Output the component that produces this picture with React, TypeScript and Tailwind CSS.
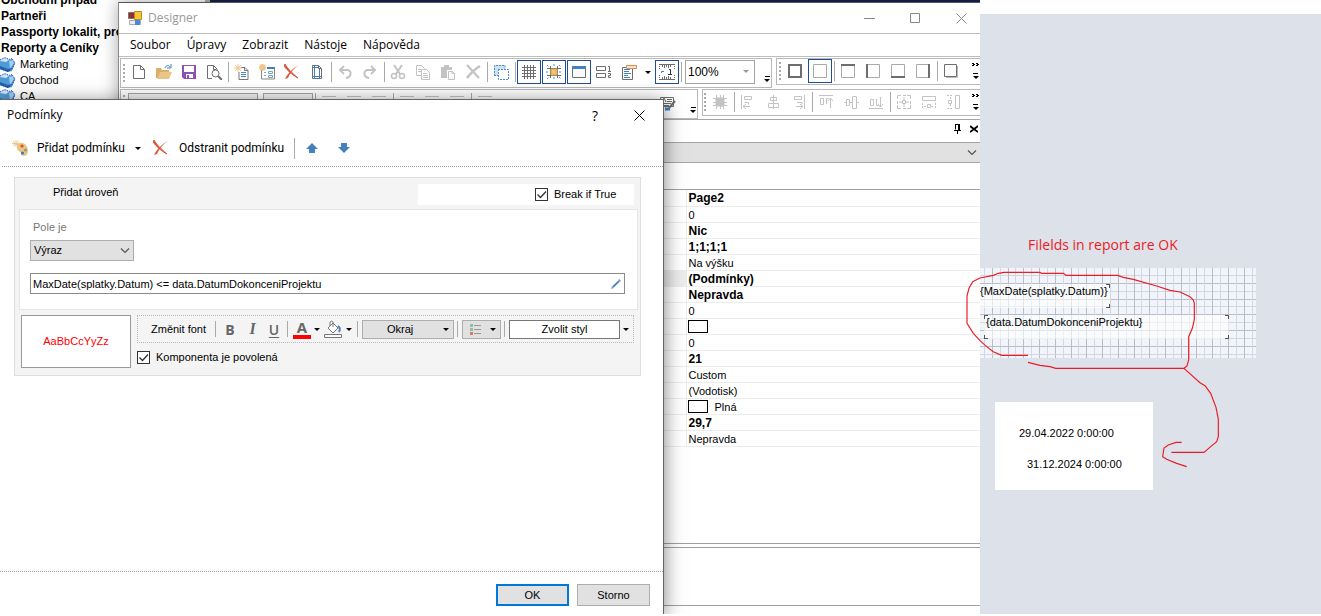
import React from 'react';
import clsx from 'clsx';

const Icon = ({ children, className }: { children: React.ReactNode; className?: string }) => (
  <svg
    viewBox="0 0 16 16"
    className={clsx('w-4 h-4 shrink-0', className)}
    fill="none"
    stroke="currentColor"
    aria-hidden="true"
  >
    {children}
  </svg>
);

const icons = {
  page: <path d="M2.500 1.500h7l4 4v9h-11zM9.500 1.500v4h4" />,
  open: (
    <>
      <path d="M0 4h5l1 2h7v2H5l-3 6H0z" fill="#dcae68" stroke="none" />
      <path d="M4 8h12l-3 7H1z" fill="#ebc487" stroke="none" />
      <path d="M9 4c1-3 4-3 5-1M15 0v4h-4" stroke="#3f7fbd" />
    </>
  ),
  save: (
    <>
      <path d="M1 1h14v14H3l-2-2z" fill="#8d51b2" stroke="none" />
      <path d="M3 2h10v6H3zM5 10h7v4H5z" fill="#fff" stroke="none" />
      <path d="M6 11h2v3H6z" fill="#8d51b2" stroke="none" />
    </>
  ),
  preview: (
    <>
      <path d="M6 14.500H1.500v-13h6l4 4M7.500 1.500v4h3" />
      <circle cx="9.500" cy="9.500" r="3.500" />
      <path d="M12 12l4 4" strokeWidth="2" />
    </>
  ),
  newPage: (
    <>
      <path d="M7 3.500h4l3 3v9h-9V8M10.500 3.500v3H14" stroke="#777" />
      <path d="M7 8.500h5M7 10.500h5M7 12.500h5" stroke="#4b86bd" />
      <path d="M4 0v8M0 4h8M1 1l6 6M7 1L1 7" stroke="#ecc68a" />
    </>
  ),
  newForm: (
    <>
      <path d="M2.500 6v9h13V3.500H8" stroke="#888" />
      <path d="M8 4h8" stroke="#3f7fbd" strokeWidth="2" />
      <path d="M5 8.500h2M5 11.500h2M9.500 7.500h4v2h-4zM9.500 11.500h4v2h-4z" stroke="#7fa3c7" />
      <path d="M3.500 0v7M0 3.500h7M1 1l5 5M6 1L1 6" stroke="#ecc68a" strokeWidth="2" />
    </>
  ),
  remove: (
    <>
      <path d="M1 0c2 4 7 9 13 14C8 11 3 6 0 2z" fill="#d9573f" stroke="#d9573f" />
      <path d="M15 1C10 4 6 9 4 14l-3 1C4 9 9 4 15 1z" fill="#d9573f" stroke="none" />
    </>
  ),
  pageSetup: (
    <>
      <path d="M3.500 1.500h6l3 3v10h-9zM9.500 1.500v3h3" />
      <path d="M5.500 1v14M10.500 5v10M3 12.500h10M3 3.500h7" stroke="#3f7fbd" />
    </>
  ),
  undo: <path d="M3 6h7c5 0 5 7-1 8M7 2L3 6l4 4" strokeWidth="2" />,
  redo: <path d="M13 6H6c-5 0-5 7 1 8M9 2l4 4-4 4" strokeWidth="2" />,
  cut: (
    <>
      <path d="M4 1l6 9M12 1L6 10" strokeWidth="2" />
      <circle cx="4" cy="12" r="2.500" strokeWidth="1.500" />
      <circle cx="12" cy="12" r="2.500" strokeWidth="1.500" />
    </>
  ),
  copy: <path d="M6 11.500H1.500v-10h5l3 3M3 5.500h3M3 7.500h3M6.500 5.500h5l3 3v7h-8zM8 9.500h4M8 11.500h5M8 13.500h5" />,
  paste: (
    <>
      <path d="M1 3h3V1h5v2h3v3H7v8H1z" fill="currentColor" stroke="none" />
      <path d="M8.500 7.500h4l2 2v6h-6zM12 7.500v2h2" />
    </>
  ),
  removeOff: (
    <>
      <path d="M2 1l12 13" strokeWidth="2" />
      <path d="M15 2C10 5 5 10 2 14" strokeWidth="2.500" />
    </>
  ),
  selectAll: (
    <>
      <path d="M1 1h11v4H5v7H1z" fill="#cfe0f1" stroke="none" />
      <path d="M1.500 12V1.500H12V5M1 11.500h4M5 5.500h10.500v10h-10V5" stroke="#4b8fd0" strokeDasharray="2 1" />
    </>
  ),
  grid: <path d="M3.500 1v14M6.500 1v14M9.500 1v14M12.500 1v14M1 3.500h14M1 6.500h14M1 9.500h14M1 12.500h14" />,
  snap: (
    <>
      <path d="M4.500 2v12M11.500 2v12M1 4.500h14M1 11.500h14" />
      <path d="M5 5h6v6H5z" fill="#f0c271" stroke="#d9a64f" />
      <path d="M8 0v3M8 13v3M0 8h3M13 8h3M1 1l2 2M13 1l2 2M1 15l2-2M13 13l2 2" stroke="#4b8fd0" strokeDasharray="2 1" />
    </>
  ),
  header: (
    <>
      <path d="M1.500 2.500h13v11h-13z" fill="#fafafa" />
      <path d="M1 2h14v3H1z" fill="#4480bb" stroke="none" />
    </>
  ),
  order: (
    <>
      <path d="M.5 2.500h9v4h-9zM.5 9.500h9v4h-9z" />
      <path d="M12 2.500h1.500V7M12 7.500h3M12 9.500h2.500v2h-2v2H15" />
    </>
  ),
  report: (
    <>
      <path d="M1.500 3.500h10v12h-10z" />
      <path d="M3 5.500h6M3 7.500h5M3 9.500h7M3 11.500h4M3 13.500h6" stroke="#3f7fbd" />
      <path d="M5.500 1.500h10v3h-10z" fill="#fbe3d2" stroke="#e08c4e" />
    </>
  ),
  ruler: (
    <>
      <path d="M.5 .5h15M.5 15.500h15" />
      <path d="M.5 0v5M15.500 0v5M.5 11v5M15.500 11v5" strokeDasharray="1 1" />
      <path d="M3.500 1v2M5.500 1v3M7.500 1v2M9.500 1v3M11.500 1v2M3.500 13v2M5.500 12v3M7.500 13v2M9.500 12v3M11.500 13v2" />
      <path d="M10 5.500h1.500V10M9 10.500h4" stroke="#333" />
      <path d="M2.500 9V7.500H5" stroke="#3f7fbd" />
    </>
  ),
  borderAll: <path d="M2 2h12v12H2z" strokeWidth="2" />,
  borderNone: <path d="M1.500 1.500h13v13h-13z" stroke="#aaa" />,
  borderTop: (
    <>
      <path d="M1.500 1.500h13v13h-13z" stroke="#aaa" />
      <path d="M1 2h14" strokeWidth="2" />
    </>
  ),
  borderLeft: (
    <>
      <path d="M1.500 1.500h13v13h-13z" stroke="#aaa" />
      <path d="M2 1v14" strokeWidth="2" />
    </>
  ),
  borderBottom: (
    <>
      <path d="M1.500 1.500h13v13h-13z" stroke="#aaa" />
      <path d="M1 14h14" strokeWidth="2" />
    </>
  ),
  borderRight: (
    <>
      <path d="M1.500 1.500h13v13h-13z" stroke="#aaa" />
      <path d="M14 1v14" strokeWidth="2" />
    </>
  ),
  borderShadow: (
    <>
      <path d="M3 14.500h11.500V3" stroke="#bbb" strokeWidth="1" />
      <path d="M1.500 1.500h12v12h-12z" />
    </>
  ),
  alignGrid: (
    <>
      <path d="M4 4h8v8H4z" fill="currentColor" />
      <path d="M4.500 1v14M8.500 1v14M11.500 1v14M1 4.500h14M1 8.500h14M1 11.500h14" />
    </>
  ),
  alignLeft: <path d="M1.500 1v14M4.500 2.500h7v3h-7zM4.500 8.500h4v2M3 12.500h7M6 10l-3 2.500L6 15" />,
  alignCenter: <path d="M8.500 1v14M5.500 3.500h6v3h-6zM3.500 9.500h10v4h-10z" />,
  alignRight: <path d="M14.500 1v14M4.500 2.500h7v3h-7zM7 8.500h5v2M6 12.500h7M10 10l3 2.500-3 2.500" />,
  alignTop: <path d="M1 1.500h14M2.500 4.500h3v6h-3zM8.500 10V4.500h2M12.500 4v10M10 7l2.500-3L15 7" />,
  alignMiddle: <path d="M1 8.500h2M7 8.500h2M14 8.500h2M3.500 5.500h3v6h-3zM9.500 2.500h4v12h-4z" />,
  alignBottom: <path d="M1 14.500h14M2.500 5.500h3v6h-3zM8.500 5v6.500h2M12.500 3v10M10 10l2.500 3L15 10" />,
  center: (
    <>
      <path d="M1.500 5V1.500H5M7 1.500h3M11 1.500h3.500V5M14.500 7v3M14.500 11v3.500H11M10 14.500H7M5 14.500H1.500V11M1.500 10V7" />
      <path d="M6.500 6.500h3v3h-3zM8 3v3M8 10v3M3 8h3M10 8h3" />
    </>
  ),
  sameWidth: (
    <>
      <path d="M1.500 2.500h13v4h-13zM6.500 10.500h3v3h-3z" />
      <path d="M1.500 9v6M14.500 9v6M3 12.500h3M10 12.500h3" strokeDasharray="2 1" />
    </>
  ),
  sameHeight: (
    <>
      <path d="M9.500 1.500h4v13h-4zM2.500 6.500h3v3h-3z" />
      <path d="M1 1.500h6M1 14.500h6M4.500 3v3M4.500 10v3" strokeDasharray="2 1" />
    </>
  ),
  style: (
    <>
      <path d="M.5 2.500h13v9H.5zM7 4.500h5M7 6.500h5M2 8.500h9M2 10.500h7" />
      <path d="M2 7l2-4 2 4" />
      <path d="M15 6l-6 7" strokeWidth="2" />
      <path d="M5 14h5" stroke="#4480bb" strokeWidth="3" />
    </>
  ),
  lines: <path d="M1 1.500h14M1 4.500h14M1 7.500h14M1 10.500h14" />,
};

type IconName = keyof typeof icons;

const ToolButton = ({ icon, label, active, disabled }: {
  icon: IconName; label: string; active?: boolean; disabled?: boolean;
}) => (
  <button
    type="button"
    aria-label={label}
    className={clsx(
      'flex h-6 w-6 shrink-0 items-center justify-center',
      active && 'border border-[#1f4e96]',
      disabled ? 'text-[#c3c3c3]' : 'text-[#6e6e6e]'
    )}
  >
    <Icon>{icons[icon]}</Icon>
  </button>
);

const Grip = () => (
  <span className="mr-px h-5 w-[2px] shrink-0 self-center bg-[repeating-linear-gradient(to_bottom,#aaa_0,#aaa_2px,transparent_2px,transparent_4px)]" />
);

const Sep = () => <span className="mt-[2px] ml-px h-5 w-px shrink-0 bg-[#aaa]" />;

const Caret = ({ className }: { className?: string }) => (
  <svg viewBox="0 0 6 3" className={clsx('h-[3px] w-[6px] shrink-0', className)} aria-hidden="true">
    <path d="M0 0h6L3 3z" fill="currentColor" />
  </svg>
);

const Overflow = ({ chevrons }: { chevrons?: boolean }) => (
  <button type="button" aria-label="Další tlačítka" className="ml-auto flex shrink-0 flex-col items-center justify-end gap-[2px] self-stretch pl-[2px] pr-px pb-[5px] text-black">
    {chevrons && (
      <svg viewBox="0 0 7 4" className="mb-1 h-1 w-[7px]" aria-hidden="true">
        <path d="M0 0h2v1h1v1H2v1H0V2h1V1H0zM4 0h2v1h1v1H6v1H4V2h1V1H4z" />
      </svg>
    )}
    <span className="h-px w-[5px] bg-black" />
    <Caret />
  </button>
);

const Chevron = ({ className }: { className?: string }) => (
  <svg viewBox="0 0 10 6" className={clsx('h-[6px] w-[10px] shrink-0', className)} fill="none" stroke="#555" aria-hidden="true">
    <path d="M1 .5l4 4 4-4" strokeWidth="1.200" />
  </svg>
);

const CheckBox = ({ id, label }: { id: string; label: string }) => (
  <div className="flex items-center gap-[6px]">
    <span className="relative block h-[13px] w-[13px]">
      <input id={id} type="checkbox" defaultChecked className="peer block h-[13px] w-[13px] appearance-none border border-[#333] bg-white" />
      <svg viewBox="0 0 13 13" className="pointer-events-none absolute inset-0 hidden peer-checked:block" fill="none" stroke="#333" aria-hidden="true">
        <path d="M2.500 6.500l3 3 5.500-6" strokeWidth="1.300" />
      </svg>
    </span>
    <label htmlFor={id}>{label}</label>
  </div>
);

const Tree = () => (
  <div className="h-full w-[205px] whitespace-nowrap text-[11px] leading-4">
    <ul className="-mt-2 text-[12px] font-bold">
      <li className="pl-px">Obchodní případ</li>
      <li className="pl-px">Partneři</li>
      <li className="pl-px">Passporty lokalit, projekty</li>
      <li className="pl-px">Reporty a Ceníky</li>
    </ul>
    <ul>
      {['Marketing', 'Obchod', 'CA'].map((item) => (
        <li key={item} className="flex items-center gap-1">
          <Icon>
            <path d="M0 4l5-2 4 2 3-1 3 4-3 8-4 1-8-4z" fill="#4f9ad6" stroke="none" />
            <path d="M0 4l5-2 4 2-3 2-6-1z" fill="#cfe6f7" stroke="none" />
            <path d="M9 5l4-1 1 3-4 6z" fill="#9fcdf0" stroke="none" />
            <path d="M0 10l8 3 4-1-4 4-8-3z" fill="#2263a5" stroke="none" />
            <path d="M0 4l5-2.500 4 2 3-1 3 4.500-3 6-4 2.500L0 13" stroke="#1a35c0" strokeDasharray="1 1" />
          </Icon>
          {item}
        </li>
      ))}
    </ul>
  </div>
);

const MainToolbar = () => (
  <div className="flex">
    <div className="flex h-[30px] w-[652px] shrink-0 items-start gap-px border border-[#b8b8b8] pl-[2px] pt-px">
      <Grip />
      <ToolButton icon="page" label="Nový" />
      <ToolButton icon="open" label="Otevřít" />
      <ToolButton icon="save" label="Uložit" />
      <ToolButton icon="preview" label="Náhled" />
      <Sep />
      <ToolButton icon="newPage" label="Nová stránka" />
      <ToolButton icon="newForm" label="Nový formulář" />
      <ToolButton icon="remove" label="Smazat stránku" />
      <ToolButton icon="pageSetup" label="Vzhled stránky" />
      <Sep />
      <ToolButton icon="undo" label="Zpět" disabled />
      <ToolButton icon="redo" label="Znovu" disabled />
      <Sep />
      <ToolButton icon="cut" label="Vyjmout" disabled />
      <ToolButton icon="copy" label="Kopírovat" disabled />
      <ToolButton icon="paste" label="Vložit" disabled />
      <ToolButton icon="removeOff" label="Smazat" disabled />
      <Sep />
      <ToolButton icon="selectAll" label="Vybrat vše" />
      <Sep />
      <ToolButton icon="grid" label="Mřížka" active />
      <ToolButton icon="snap" label="Přichytit" active />
      <ToolButton icon="header" label="Záhlaví" active />
      <ToolButton icon="order" label="Pořadí" />
      <ToolButton icon="report" label="Sestava" />
      <button type="button" aria-label="Možnosti sestavy" className="flex h-6 w-3 shrink-0 items-center justify-center text-black">
        <Caret />
      </button>
      <ToolButton icon="ruler" label="Pravítko" active />
      <Sep />
      <span className="relative mx-[2px]">
        <select aria-label="Měřítko" className="block h-6 w-[70px] appearance-none border border-[#a5a5a5] bg-white pl-[2px] text-[12px]">
          <option>100%</option>
        </select>
        <Caret className="pointer-events-none absolute right-[6px] top-[10px] text-[#999]" />
      </span>
      <Overflow />
    </div>
    <div className="ml-1 flex h-[27px] min-w-0 flex-1 items-start gap-px overflow-hidden border border-r-0 border-[#b8b8b8] pl-[2px]">
      <Grip />
      <ToolButton icon="borderAll" label="Všechny okraje" />
      <ToolButton icon="borderNone" label="Bez okrajů" active />
      <Sep />
      <ToolButton icon="borderTop" label="Horní okraj" />
      <ToolButton icon="borderLeft" label="Levý okraj" />
      <ToolButton icon="borderBottom" label="Dolní okraj" />
      <ToolButton icon="borderRight" label="Pravý okraj" />
      <Sep />
      <ToolButton icon="borderShadow" label="Stín" />
      <Overflow chevrons />
    </div>
  </div>
);

const FormatToolbar = () => (
  <div className="flex">
    <div className="flex h-[30px] w-[578px] shrink-0 items-start gap-px border border-[#b8b8b8] pl-[2px] pt-px">
      <Grip />
      <select aria-label="Písmo" className="ml-px mt-[2px] h-[22px] w-[130px] appearance-none border border-[#a5a5a5] bg-[#f4f4f4]" />
      <select aria-label="Velikost" className="ml-1 mt-[2px] h-[22px] w-[50px] appearance-none border border-[#a5a5a5] bg-[#f4f4f4]" />
      <Sep />
      <ToolButton icon="lines" label="Vlevo" disabled />
      <ToolButton icon="lines" label="Na střed" disabled />
      <ToolButton icon="lines" label="Vpravo" disabled />
      <Sep />
      <ToolButton icon="lines" label="Nahoru" disabled />
      <ToolButton icon="lines" label="Doprostřed" disabled />
      <ToolButton icon="lines" label="Dolů" disabled />
      <Sep />
      <ToolButton icon="lines" label="Do bloku" disabled />
      <span className="ml-auto" />
      <ToolButton icon="style" label="Styly" />
      <span className="flex w-4 self-stretch">
        <Overflow />
      </span>
    </div>
    <div className="ml-1 flex h-[27px] min-w-0 flex-1 items-start gap-px overflow-hidden border border-r-0 border-[#b8b8b8] pl-px">
      <Grip />
      <ToolButton icon="alignGrid" label="Zarovnat na mřížku" disabled />
      <Sep />
      <ToolButton icon="alignLeft" label="Zarovnat vlevo" disabled />
      <ToolButton icon="alignCenter" label="Zarovnat na střed" disabled />
      <ToolButton icon="alignRight" label="Zarovnat vpravo" disabled />
      <Sep />
      <ToolButton icon="alignTop" label="Zarovnat nahoru" disabled />
      <ToolButton icon="alignMiddle" label="Zarovnat doprostřed" disabled />
      <ToolButton icon="alignBottom" label="Zarovnat dolů" disabled />
      <Sep />
      <ToolButton icon="center" label="Vystředit" disabled />
      <ToolButton icon="sameWidth" label="Stejná šířka" disabled />
      <ToolButton icon="sameHeight" label="Stejná výška" disabled />
      <Overflow chevrons />
    </div>
  </div>
);

const properties: { value: string; bold?: boolean; swatch?: boolean; selected?: boolean }[] = [
  { value: 'Page2', bold: true },
  { value: '0' },
  { value: 'Nic', bold: true },
  { value: '1;1;1;1', bold: true },
  { value: 'Na výšku' },
  { value: '(Podmínky)', bold: true, selected: true },
  { value: 'Nepravda', bold: true },
  { value: '0' },
  { value: '', swatch: true },
  { value: '0' },
  { value: '21', bold: true },
  { value: 'Custom' },
  { value: '(Vodotisk)' },
  { value: 'Plná', swatch: true },
  { value: '29,7', bold: true },
  { value: 'Nepravda' },
];

const PropertyPanel = () => (
  <div className="flex w-[320px] shrink-0 flex-col">
    <div className="flex h-[23px] items-start justify-end gap-2 border-b border-[#a5a5a5] pt-1">
      <button type="button" aria-label="Připnout">
        <svg viewBox="0 0 9 10" className="h-[10px] w-[9px]" fill="none" stroke="#000" aria-hidden="true">
          <path d="M2.500 0v5.500M2 .5h5M5.500 0v6M6.500 0v6M1 6.500h7M4.500 6v4" />
        </svg>
      </button>
      <button type="button" aria-label="Zavřít panel" className="mr-[2px] mt-px">
        <svg viewBox="0 0 8 8" className="h-2 w-2" stroke="#000" strokeWidth="1.800" aria-hidden="true">
          <path d="M0 1l8 6M8 1L0 7" />
        </svg>
      </button>
    </div>
    <button type="button" aria-label="Vybrat komponentu" className="flex h-5 items-center justify-end border-b border-[#a5a5a5] bg-[#e1e1e1] pr-[3px]">
      <Chevron />
    </button>
    <div className="h-[27px] border-b border-[#a0a0a0]" />
    <div className="flex-1 border-b border-[#a0a0a0]">
      <table className="w-full border-collapse">
        <tbody>
          {properties.map((property, index) => (
            <tr key={index} className="h-4 border-b border-[#ececec]">
              <th scope="row" aria-label="Vlastnost" className={clsx('w-[26px] border-r border-[#ececec] p-0', property.selected && 'bg-[#ececec]')} />
              <td className={clsx('p-0', property.bold ? 'text-[12px] font-bold' : 'text-[11px]')}>
                <div className={clsx('flex h-[15px] items-center whitespace-nowrap pt-px leading-[14px]', property.swatch ? 'pl-px' : 'pl-[2px]')}>
                  {property.swatch && <span className="mr-[7px] h-[13px] w-5 border border-black bg-white" />}
                  {property.value}
                </div>
              </td>
            </tr>
          ))}
        </tbody>
      </table>
    </div>
    <div className="mb-2 mt-[3px] h-[59px] border-y border-[#a0a0a0]" />
  </div>
);

const Designer = () => (
  <section className="absolute bottom-0 left-[118px] right-0 top-[2px] flex flex-col border-l border-t border-l-[#8a8a8a] border-t-[#555] bg-white shadow-[0_0_16px_rgba(0,0,0,0.35)]">
    <header className="flex h-[31px] items-center border-b border-[#bdbdbd] pl-[9px] font-['Open_Sans',sans-serif] text-[12px] text-[#999]">
      <svg viewBox="0 0 14 14" className="mr-[6px] h-[14px] w-[14px]" aria-hidden="true">
        <path d="M.5 1.500h6v6h-6z" fill="#9b2c2c" stroke="#777" />
        <path d="M1.500 9.500h11v4h-11z" fill="#eee" stroke="#aaa" />
        <path d="M7 9h5v5H7z" fill="#4d85e0" />
        <path d="M6.500.5h7v8h-7z" fill="#f6c634" stroke="#b98a1d" />
      </svg>
      Designer
      <div className="ml-auto flex items-center gap-[35px] pr-[13px] text-[#888]">
        <button type="button" aria-label="Minimalizovat">
          <svg viewBox="0 0 11 11" className="h-[11px] w-[11px]" stroke="currentColor"><path d="M0 5.500h11" /></svg>
        </button>
        <button type="button" aria-label="Maximalizovat">
          <svg viewBox="0 0 11 11" className="h-[11px] w-[11px]" stroke="currentColor" fill="none"><path d="M.5 .5h9v9h-9z" /></svg>
        </button>
        <button type="button" aria-label="Zavřít">
          <svg viewBox="0 0 11 11" className="h-[11px] w-[11px]" stroke="currentColor"><path d="M.5 .5l10 10M10.500 .5l-10 10" /></svg>
        </button>
      </div>
    </header>
    <nav className="flex h-[23px] items-center gap-4 border-b border-[#bdbdbd] pl-[11px] font-['Open_Sans',sans-serif] text-[12px]">
      {['Soubor', 'Úpravy', 'Zobrazit', 'Nástoje', 'Nápověda'].map((item) => (
        <button key={item} type="button">{item}</button>
      ))}
    </nav>
    <div className="flex flex-col gap-px border-b border-[#a5a5a5] pl-px pt-px">
      <MainToolbar />
      <FormatToolbar />
    </div>
    <div className="flex flex-1">
      <div className="min-w-0 flex-1" />
      <PropertyPanel />
    </div>
  </section>
);

const ConditionBox = () => (
  <div className="ml-[14px] mr-[22px] mt-[10px] flex h-[199px] flex-col border border-[#dedede] bg-[#f4f4f4]">
    <div className="flex h-[31px] shrink-0 items-start justify-between">
      <button type="button" className="ml-[38px] mt-[6px] leading-4">Přidat úroveň</button>
      <div className="mr-[6px] mt-[6px] flex h-[21px] w-[216px] items-center bg-white pl-[117px]">
        <CheckBox id="break-if-true" label="Break if True" />
      </div>
    </div>
    <div className="ml-1 mr-[2px] h-[101px] shrink-0 border border-[#e6e6e6] bg-white pl-[10px] pr-3 pt-[9px]">
      <label htmlFor="field-kind" className="ml-[3px] block h-[21px] leading-4 text-[#777]">Pole je</label>
      <div className="relative w-[104px]">
        <select id="field-kind" className="block h-[21px] w-full appearance-none border border-[#adadad] bg-[#e1e1e1] pl-[3px]">
          <option>Výraz</option>
        </select>
        <Chevron className="pointer-events-none absolute right-1 top-2" />
      </div>
      <div className="mt-3 flex h-[21px] items-center border border-[#8a8a8a] bg-white">
        <input
          type="text"
          aria-label="Výraz"
          defaultValue="MaxDate(splatky.Datum) <= data.DatumDokonceniProjektu"
          className="h-full min-w-0 flex-1 pl-[2px] outline-none"
        />
        <button type="button" aria-label="Upravit výraz" className="mr-[3px]">
          <svg viewBox="0 0 11 11" className="h-[10px] w-[10px]" aria-hidden="true">
            <path d="M2 9l7-7" stroke="#4480bb" strokeWidth="2" />
            <path d="M0 11l1-3 2 2zM9 0l2 2-1 1-2-2z" fill="#6c9fd0" />
          </svg>
        </button>
      </div>
    </div>
    <div className="ml-[6px] mt-[5px] flex gap-[6px]">
      <div className="flex h-[53px] w-[110px] shrink-0 items-center justify-center border border-[#999] bg-white text-[#ff0000]">
        AaBbCcYyZz
      </div>
      <div className="mr-[6px] flex-1">
        <div className="flex h-[28px] items-center border border-dotted border-[#b8b8b8] text-[#666]">
          <button type="button" className="ml-[13px] w-[56px] whitespace-nowrap text-left text-black">Změnit font</button>
          <span className="ml-2 h-4 w-px bg-[#aaa]" />
          <button type="button" aria-label="Tučně" className="w-[28px] font-['Open_Sans',sans-serif] text-[14px] font-bold">B</button>
          <button type="button" aria-label="Kurzíva" className="w-[17px] font-['Liberation_Serif',serif] text-[16px] font-bold italic">I</button>
          <button type="button" aria-label="Podtržení" className="w-[26px] font-['Open_Sans',sans-serif] text-[14px] font-semibold underline underline-offset-2">U</button>
          <span className="h-4 w-px bg-[#aaa]" />
          <button type="button" aria-label="Barva písma" className="ml-[5px] flex w-[18px] flex-col items-center border-b-4 border-[#ff0000] pt-px font-['Open_Sans',sans-serif] text-[15px] font-bold leading-[15px]">A</button>
          <Caret className="ml-[3px] text-black" />
          <button type="button" aria-label="Barva pozadí" className="ml-1">
            <svg viewBox="0 0 18 18" className="h-[18px] w-[18px]" fill="none" stroke="#777" aria-hidden="true">
              <path d="M4 8l5-5 5 5-5 5zM6 6V2q2-2 3 0v5" fill="#fff" />
              <path d="M14 6q3 2 1 6" stroke="#4480bb" strokeWidth="2" />
              <path d="M.5 14.500h17v3H.5z" fill="#fff" />
            </svg>
          </button>
          <Caret className="ml-1 text-black" />
          <span className="ml-[5px] h-4 w-px bg-[#aaa]" />
          <button type="button" className="ml-1 flex h-[19px] w-[92px] items-center justify-between border border-[#adadad] bg-[#e1e1e1] pl-[24px] pr-1 text-black">
            Okraj
            <Caret />
          </button>
          <span className="ml-[3px] h-4 w-px bg-[#aaa]" />
          <button type="button" aria-label="Ikony" className="ml-1 flex h-[19px] w-[39px] items-center justify-between border border-[#adadad] bg-[#e1e1e1] pl-[7px] pr-1 text-black">
            <svg viewBox="0 0 11 11" className="h-[11px] w-[11px]" aria-hidden="true">
              <path d="M0 0h3v3H0zM0 4h3v3H0z" fill="#8cc0a8" />
              <path d="M0 8h3v3H0z" fill="#e0785a" />
              <path d="M4 1.500h7M4 5.500h7M4 9.500h7" stroke="#999" />
            </svg>
            <Caret />
          </button>
          <span className="ml-[3px] h-4 w-px bg-[#aaa]" />
          <button type="button" className="ml-1 h-[19px] min-w-0 flex-1 border border-[#777] bg-white text-black">Zvolit styl</button>
          <Caret className="ml-[3px] mr-1 text-black" />
        </div>
        <div className="mt-[6px]">
          <CheckBox id="component-enabled" label="Komponenta je povolená" />
        </div>
      </div>
    </div>
  </div>
);

const ConditionsDialog = () => (
  <section
    role="dialog"
    aria-label="Podmínky"
    className="absolute bottom-0 left-0 top-[99px] flex w-[664px] flex-col border-r border-t border-[#666] bg-white shadow-[0_3px_18px_rgba(0,0,0,0.5)]"
  >
    <header className="flex h-[30px] items-center pl-[7px] font-['Open_Sans',sans-serif] text-[12px]">
      Podmínky
      <button type="button" aria-label="Nápověda" className="ml-auto text-[14px]">?</button>
      <button type="button" aria-label="Zavřít" className="ml-[36px] mr-[18px]">
        <svg viewBox="0 0 11 11" className="h-[11px] w-[11px]" stroke="#000" aria-hidden="true">
          <path d="M.5 .5l10 10M10.500 .5l-10 10" />
        </svg>
      </button>
    </header>
    <div className="ml-[2px] flex h-[37px] items-center border-b border-dotted border-[#999] pl-[10px] font-['Roboto',sans-serif] text-[12px]">
      <button type="button" className="flex w-[129px] items-center gap-[9px] whitespace-nowrap">
        <Icon>
          <path d="M5 4c5-3 11 0 11 7 0 5-4 6-7 4 1-4-3-3-4-6z" fill="#ebc487" stroke="none" />
          <path d="M4 0v7M0 3.500h8M1 1l5 5M7 1L1 6" stroke="#ecc98f" />
          <circle cx="10" cy="6" r="1.600" fill="#e0492a" stroke="none" />
          <circle cx="13.500" cy="10" r="1.600" fill="#7aa88b" stroke="none" />
          <circle cx="10.500" cy="13" r="1.600" fill="#3d78b8" stroke="none" />
        </Icon>
        Přidat podmínku
        <Caret className="ml-auto" />
      </button>
      <button type="button" className="ml-3 flex w-[134px] items-center gap-[10px] whitespace-nowrap">
        <Icon>{icons.remove}</Icon>
        Odstranit podmínku
      </button>
      <span className="ml-[7px] h-[21px] w-px bg-[#aaa]" />
      <button type="button" aria-label="Posunout nahoru" className="ml-[11px]">
        <svg viewBox="0 0 12 10" className="h-[10px] w-3" fill="#4480bb"><path d="M6 0l6 6H9v4H3V6H0z" /></svg>
      </button>
      <button type="button" aria-label="Posunout dolů" className="ml-5">
        <svg viewBox="0 0 12 10" className="h-[10px] w-3" fill="#4480bb"><path d="M6 10l6-6H9V0H3v4H0z" /></svg>
      </button>
    </div>
    <ConditionBox />
    <footer className="mt-auto flex h-[43px] justify-end gap-2 border-t border-dotted border-[#999] pr-[13px] pt-3">
      <button type="button" className="h-[22px] w-[73px] border-2 border-[#0078d7] bg-[#e1e1e1]">OK</button>
      <button type="button" className="h-[22px] w-[73px] border border-[#adadad] bg-[#e1e1e1]">Storno</button>
    </footer>
  </section>
);

const minorSteps = Array.from({ length: 36 }, (_, i) => i);

const ReportCanvas = () => (
  <div className="relative h-[90px] w-[276px] overflow-hidden bg-[#f1f4fb] text-[11px] leading-[14px]">
    <svg viewBox="0 0 276 90" className="h-full w-full" shapeRendering="crispEdges" aria-hidden="true">
      {minorSteps.map((i) => (
        <path
          key={i}
          d={`M${Math.round(4 + i * 7.87) + 0.5} 0V90M0 ${Math.round(7 + i * 7.87) + 0.5}H276`}
          stroke={i % 2 ? '#b9bec6' : '#d3d8df'}
        />
      ))}
    </svg>
    <div className="absolute left-0 top-4 h-6 w-[130px] whitespace-nowrap bg-white/60">
      {'{MaxDate(splatky.Datum)}'}
      <span className="absolute right-0 top-0 h-1 w-1 border-r border-t border-[#555]" />
      <span className="absolute bottom-0 right-0 h-1 w-1 border-b border-r border-[#555]" />
    </div>
    <div className="absolute left-1 top-[47px] h-6 w-[245px] whitespace-nowrap bg-white/60 pl-[2px]">
      {'{data.DatumDokonceniProjektu}'}
      <span className="absolute left-0 top-0 h-1 w-1 border-l border-t border-[#555]" />
      <span className="absolute bottom-0 left-0 h-1 w-1 border-b border-l border-[#555]" />
      <span className="absolute right-0 top-0 h-1 w-1 border-r border-t border-[#555]" />
      <span className="absolute bottom-0 right-0 h-1 w-1 border-b border-r border-[#555]" />
    </div>
  </div>
);

const ReportNotes = () => (
  <aside className="relative mt-[14px] bg-[#dde1e9]">
    <p className="ml-12 pt-[220px] font-['Open_Sans',sans-serif] text-[14px] leading-[22px] text-[#ed1c24]">
      Filelds in report are OK
    </p>
    <div className="mt-3">
      <ReportCanvas />
    </div>
    <div className="ml-[15px] mt-[44px] h-[88px] w-[158px] bg-white pt-6 text-[11px] leading-[14px]">
      <p className="pl-6">29.04.2022 0:00:00</p>
      <p className="pl-8 pt-[17px]">31.12.2024 0:00:00</p>
    </div>
    <svg
      viewBox="0 0 1083 840"
      className="pointer-events-none absolute -left-5 top-[206px] z-10 h-[280px] w-[361px]"
      fill="none"
      stroke="#ed1c24"
      strokeWidth="3.500"
      aria-hidden="true"
    >
      <path d="M204 406H125L100 395 80 380 60 362 40 340 21 310V228L27 205 38 185 60 174 100 166 115 160 132 157H240L244 160H310L318 166H473L490 172 520 178 590 198 630 211 660 216 690 230 700 240 703 250V298L697 325 686 350V420L681 438 672 445H287L270 440 240 436 204 427" />
      <path d="M672 445L720 488 735 497 752 520 768 562 775 598V650L770 665 752 680 732 697H634" />
      <path d="M665 667H648L625 675 612 684 608 710 620 718 650 730 680 740" />
    </svg>
  </aside>
);

const App = () => (
  <main className="grid min-h-screen grid-cols-[minmax(0,1fr)_341px] bg-white pb-[2px] font-['Liberation_Sans',Arial,sans-serif] text-[11px] text-black">
    <div className="relative flex overflow-hidden">
      <Tree />
      <div className="h-[3px] flex-1 border-l-[5px] border-[#b5b2a8] bg-[#16204d]" />
      <Designer />
      <ConditionsDialog />
    </div>
    <ReportNotes />
  </main>
);

export default App;
